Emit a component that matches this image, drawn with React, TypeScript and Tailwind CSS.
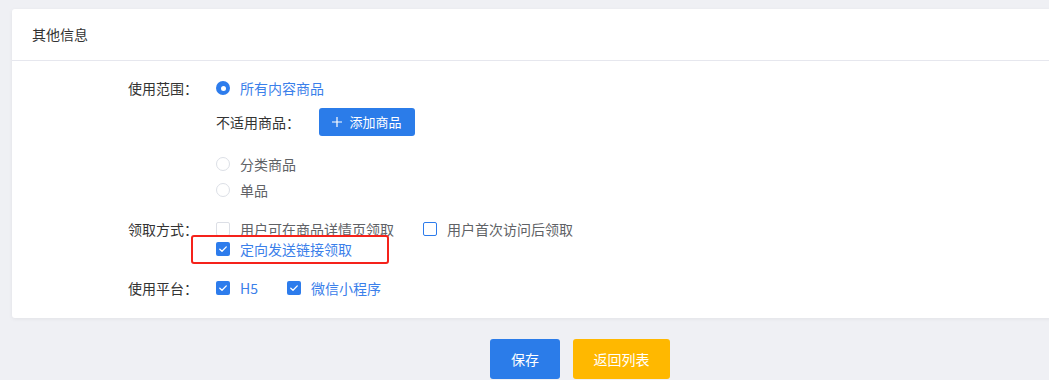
import React from 'react';

const font = { fontFamily: '"Noto Sans CJK SC", "Noto Sans", sans-serif' };

const Radio: React.FC<{ checked?: boolean; label: string }> = ({ checked, label }) => (
  <div className="flex items-center h-5">
    {checked ? (
      <span className="w-[14px] h-[14px] rounded-full bg-[#2d7cec] flex items-center justify-center">
        <span className="w-[5px] h-[5px] rounded-full bg-white" />
      </span>
    ) : (
      <span className="w-[14px] h-[14px] rounded-full border border-[#dcdfe6] bg-white" />
    )}
    <span className={`ml-[10px] ${checked ? 'text-[#3b80ea]' : 'text-[#606266]'}`}>{label}</span>
  </div>
);

const Check: React.FC<{ checked?: boolean; focus?: boolean; label: string; className?: string }> = ({
  checked,
  focus,
  label,
  className = '',
}) => (
  <div className={`flex items-center h-5 ${className}`}>
    {checked ? (
      <span className="w-[14px] h-[14px] rounded-[2px] bg-[#2d7cec] flex items-center justify-center">
        <svg viewBox="0 0 14 14" className="w-[14px] h-[14px]" fill="none">
          <path d="M3.8 7.2 L6 9.3 L10.3 4.9" stroke="white" strokeWidth="1.3" strokeLinecap="round" strokeLinejoin="round" />
        </svg>
      </span>
    ) : (
      <span
        className={`w-[14px] h-[14px] rounded-[2px] bg-white ${
          focus ? 'border-[1.5px] border-[#2d7cec]' : 'border border-[#dcdfe6]'
        }`}
      />
    )}
    <span className={`ml-[10px] ${checked ? 'text-[#3b80ea]' : 'text-[#606266]'}`}>{label}</span>
  </div>
);

const Label: React.FC<{ text: string }> = ({ text }) => (
  <div className="w-[186px] shrink-0 h-5 flex items-center justify-end text-[#333]">{text}</div>
);

export default function App() {
  return (
    <div className="w-full h-[380px] overflow-hidden bg-[#eff0f4] text-[14px]" style={font}>
      <div className="w-[1160px] pt-[9px]">
        {/* Card */}
        <div className="relative ml-3 w-[1136px] bg-white rounded-[3px] shadow-[0_1px_4px_rgba(0,0,0,0.06)]">
          <div className="h-[52px] pl-5 flex items-center border-b border-[#e6e7ee] text-[14px] text-[#333]">
            其他信息
          </div>

          <div className="pt-[17px] pb-5">
            {/* 使用范围 */}
            <div className="flex">
              <Label text="使用范围：" />
              <div className="ml-[18px] flex flex-col">
                <Radio checked label="所有内容商品" />
                <div className="mt-[10px] flex items-center h-7">
                  <span className="text-[#333] w-[103px]">不适用商品：</span>
                  <button className="h-7 w-24 rounded-[3px] bg-[#2b7ce9] text-white text-[13px] flex items-center justify-center gap-[7px]">
                    <svg viewBox="0 0 10 10" className="w-[10px] h-[10px]" fill="none">
                      <path d="M5 0 V10 M0 5 H10" stroke="white" strokeWidth="1.2" />
                    </svg>
                    添加商品
                  </button>
                </div>
                <div className="mt-[18px] flex flex-col gap-[6px]">
                  <Radio label="分类商品" />
                  <Radio label="单品" />
                </div>
              </div>
            </div>

            {/* 领取方式 */}
            <div className="flex mt-[19px]">
              <Label text="领取方式：" />
              <div className="ml-[18px] flex flex-col">
                <div className="flex">
                  <Check label="用户可在商品详情页领取" />
                  <Check focus label="用户首次访问后领取" className="ml-[29px]" />
                </div>
                <Check checked label="定向发送链接领取" />
              </div>
            </div>

            {/* 使用平台 */}
            <div className="flex mt-[19px]">
              <Label text="使用平台：" />
              <div className="ml-[18px] flex">
                <Check checked label="H5" />
                <Check checked label="微信小程序" className="ml-[29px]" />
              </div>
            </div>
          </div>

          {/* annotation */}
          <div className="absolute left-[179px] top-[226px] w-[198px] h-[29px] border-2 border-[#f5221b] rounded-[3px]" />
        </div>

        {/* Footer buttons */}
        <div className="flex justify-center gap-[13px] mt-[21px]">
          <button className="w-[70px] h-10 rounded-[3px] bg-[#2b7ce9] text-white text-[14px]">保存</button>
          <button className="w-[97px] h-10 rounded-[3px] bg-[#ffb800] text-white text-[14px]">返回列表</button>
        </div>
      </div>
    </div>
  );
}
